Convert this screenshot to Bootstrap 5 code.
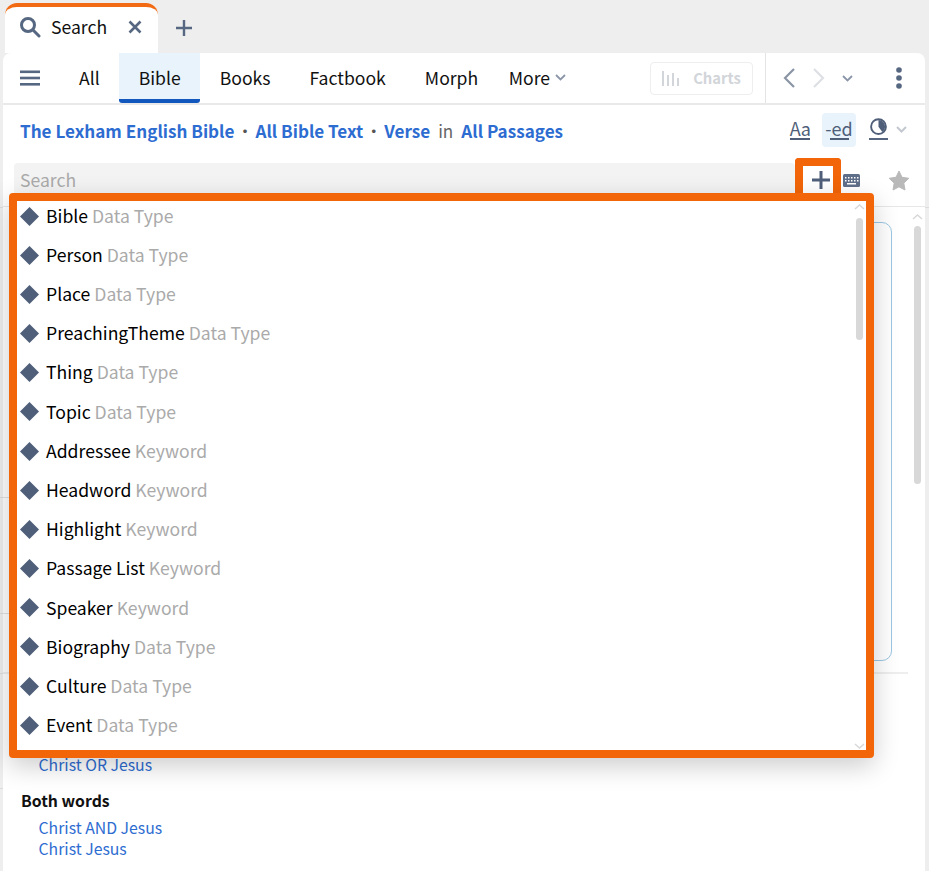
<!DOCTYPE html>
<html lang="en"><head><meta charset="utf-8"><title>Search</title>
<link href="https://cdn.jsdelivr.net/npm/bootstrap@5.3.0/dist/css/bootstrap.min.css" rel="stylesheet">
<style>
html,body{height:871px;overflow:hidden}
body{font-family:"Noto Sans CJK SC","Noto Sans",sans-serif;font-size:17.6px;color:#111;position:relative;
background-color:#eee;background-image:linear-gradient(#dcdcdc,#dcdcdc);background-repeat:repeat-x;background-size:3px 1px;background-position:0 207px}
a{text-decoration:none}
svg{display:block;flex:none}
.tabbar{height:53px;padding:3px 0 0 5px;gap:17px;background:#eee}
.tabitem{width:153px;height:50px;background:#fff;border-top:4px solid #f26a13;border-radius:12px 12px 0 0;padding:0 16px 6px 14px;gap:10px}
.sheet{height:818px;margin:0 4px 0 3px;background:#fff;border-radius:8px 8px 0 0;display:flex;flex-direction:column}
.navrow{height:52px;border-bottom:2px solid #e9e9e9;flex:none}
.burger{width:62px;padding-left:17px}
.navlink{height:50px;padding:0 19.500px;color:#111;line-height:50px;border-bottom:4px solid transparent;margin:0}
.navlink.on{background:#e8f3fc;border-bottom-color:#1257bd;border-radius:0 0 3px 3px}
.navlink.firstlink{padding-left:14px}
.morelink{padding-left:11px;gap:5px}
.chartbtn{width:103px;height:33px;border:1px solid #eee;border-radius:4px;color:#d2d5d9;font-size:14.800px;font-weight:600;gap:13px;margin-right:12px}
.navtools{width:160px;height:100%;border-left:1px solid #e4e4e4;padding:0 23px 0 17px}
.nextchev{margin-left:18px}
.downchev{margin-left:17px}
.crumbs{height:52px;padding:0 17px;color:#666;flex:none;font-size:17.100px}
.crumbs a{color:#2d6cd1;font-weight:600}
.dotsep{width:21px;text-align:center;font-size:17px;color:#555}
.inword{margin:0 8px}
.viewtools{margin-right:1px;padding-bottom:3px}
.viewbtn{width:34px;height:34px;border-radius:4px;font-size:18px;color:#4f5f79;line-height:1;gap:1px}
.viewbtn.on{background:#e8f3fc;margin:0 13px 0 12px}
.aabtn{width:20px;letter-spacing:-.5px}
.piebtn{width:19px;margin-right:8px}
.searchrow{height:50px;flex:none;border-bottom:1px solid #e7e7e7;padding:6px 0 0 11px}
.searchbox{width:781px;height:31px;background:#f3f3f3;border-radius:4px 4px 0 0;padding-left:6px;color:#aaa;line-height:33px}
.keyslot{gap:28px;margin-left:48px}
.keyicon{margin-top:11px}
.staricon{margin-top:7px}
.bodyarea{flex:1;position:relative;overflow:hidden;
background-image:linear-gradient(#e2e2e2,#e2e2e2),linear-gradient(#e2e2e2,#e2e2e2);background-repeat:no-repeat;background-size:6px 1px;background-position:0 290px,0 406px}
.syntaxbox{width:500px;height:439px;border:1px solid #9cc7e4;border-radius:10px;margin:15px 33px 0 auto}
.divline{height:2px;background:#eee;margin:11px 17px 0 0}
.hintblock{padding-left:18px;margin-top:80px;font-size:15.800px;line-height:21px}
.hintblock a{display:block;padding-left:17.500px;color:#2d6cd1}
.hinthead{font-weight:600;color:#111;margin:15px 0 6px}
.rail{width:7px;background:#d8d8d8;border-radius:4px;position:absolute}
.outerrail{right:4px;top:19px;height:258px}
.outerarrow{position:absolute;right:2px;top:7px}
.overtarget{position:absolute;left:795px;top:158px;width:46px;height:39px;border:8px solid #f26508;border-bottom:0;border-radius:4px 4px 0 0;background:#fff;z-index:5;display:flex;justify-content:center;padding:5px 0 0 5px}
.droplist{position:absolute;left:9px;top:193px;width:865px;height:565px;border:8px solid #f26508;border-radius:4px;background:#fff;box-shadow:0 8px 26px rgba(0,0,0,.2);z-index:6;padding:0 0 0 3px}
.dropitem{height:30px;margin-bottom:9.180px;gap:7px;color:#000}
.dropitem span.kind{color:#aaa}
.innerrail{right:3px;top:17px;height:122px}
.arrowtop,.arrowbot{position:absolute;right:1px}
.arrowtop{top:3px}.arrowbot{bottom:1px}
.stripmarks{position:absolute;left:0;width:3px;height:1px;background:#dcdcdc}
.mark1{top:497px}.mark2{top:613px}.mark3{top:673px}.mark4{top:788px}
</style></head><body>
<div class="tabbar d-flex align-items-start">
  <div class="tabitem d-flex align-items-center">
    <svg width="22" height="22" viewBox="0 0 22 22" fill="none" stroke="#566781" stroke-width="3"><circle cx="9" cy="9" r="6.500"/><path d="M14 14l6 6" stroke-linecap="round"/></svg>
    <span>Search</span>
    <svg class="ms-auto" width="14" height="14" viewBox="0 0 14 14" stroke="#566781" stroke-width="2.600"><path d="M1.500 1.500l11 11M12.500 1.500l-11 11"/></svg>
  </div>
  <svg class="align-self-center" width="18" height="18" viewBox="0 0 18 18" stroke="#566781" stroke-width="2.400"><path d="M9 1v16M1 9h16"/></svg>
</div>
<div class="stripmarks mark1"></div><div class="stripmarks mark2"></div><div class="stripmarks mark3"></div><div class="stripmarks mark4"></div>
<div class="sheet">
  <div class="navrow d-flex align-items-center">
    <div class="burger"><svg width="20" height="16" viewBox="0 0 20 16" fill="#566781"><rect width="20" height="2.600" y="0.500"/><rect width="20" height="2.600" y="6.700"/><rect width="20" height="2.600" y="13"/></svg></div>
    <div class="navlink firstlink">All</div>
    <div class="navlink on">Bible</div>
    <div class="navlink">Books</div>
    <div class="navlink">Factbook</div>
    <div class="navlink">Morph</div>
    <div class="morelink d-flex align-items-center">More <svg width="11" height="7" viewBox="0 0 11 7" fill="none" stroke="#8b96a8" stroke-width="1.800"><path d="M1 1l4.500 4.500L10 1"/></svg></div>
    <div class="ms-auto d-flex align-items-center h-100">
      <div class="chartbtn d-flex align-items-center justify-content-center"><svg width="18" height="15" viewBox="0 0 18 15" fill="#d2d5d9"><rect x="0" y="0" width="2" height="15"/><rect x="5" y="4" width="2" height="11"/><rect x="10" y="2" width="2" height="13"/><rect x="15" y="7" width="2" height="8"/></svg>Charts</div>
      <div class="navtools d-flex align-items-center">
        <svg width="12" height="20" viewBox="0 0 12 20" fill="none" stroke="#8a95a5" stroke-width="2.200"><path d="M11 1L2 10l9 9"/></svg>
        <svg class="nextchev" width="12" height="20" viewBox="0 0 12 20" fill="none" stroke="#dde0e4" stroke-width="2.200"><path d="M1 1l9 9-9 9"/></svg>
        <svg class="downchev" width="11" height="7" viewBox="0 0 11 7" fill="none" stroke="#8b96a8" stroke-width="1.800"><path d="M1 1l4.500 4.500L10 1"/></svg>
        <svg class="ms-auto" width="6" height="22" viewBox="0 0 6 22" fill="#566781"><circle cx="3" cy="3" r="2.800"/><circle cx="3" cy="11" r="2.800"/><circle cx="3" cy="19" r="2.800"/></svg>
      </div>
    </div>
  </div>
  <div class="crumbs d-flex align-items-center">
    <a href="#">The Lexham English Bible</a><span class="dotsep">•</span><a href="#">All Bible Text</a><span class="dotsep">•</span><a href="#">Verse</a><span class="inword">in</span><a href="#">All Passages</a>
    <div class="viewtools ms-auto d-flex align-items-center">
      <div class="viewbtn aabtn d-flex flex-column align-items-center justify-content-center"><span>Aa</span><svg width="20" height="2" viewBox="0 0 20 2" fill="#4f5f79"><rect width="20" height="2"/></svg></div>
      <div class="viewbtn on d-flex flex-column align-items-center justify-content-center"><span>-ed</span><svg width="19" height="2" viewBox="0 0 19 2" fill="#4f5f79"><rect width="19" height="2"/></svg></div>
      <div class="viewbtn piebtn d-flex flex-column align-items-center justify-content-center"><svg width="19" height="23" viewBox="0 0 20 24" fill="none"><circle cx="10" cy="9" r="7.800" stroke="#4f5f79" stroke-width="2"/><path d="M10 2a7 7 0 0 1 7 7 7 7 0 0 1-3 5.700L10 9z" fill="#4f5f79"/><rect y="21" width="20" height="2" fill="#4f5f79"/></svg></div>
      <svg width="11" height="7" viewBox="0 0 11 7" fill="none" stroke="#c3c8d0" stroke-width="2"><path d="M1 1l4.500 4.500L10 1"/></svg>
    </div>
  </div>
  <div class="searchrow d-flex">
    <div class="searchbox">Search</div>
    <div class="keyslot d-flex">
      <svg class="keyicon" width="17" height="13" viewBox="0 0 17 13"><rect width="17" height="13" rx="1.500" fill="#5f6f8a"/><g fill="#fff"><rect x="2" y="3" width="1.500" height="1.500"/><rect x="5" y="3" width="1.500" height="1.500"/><rect x="8" y="3" width="1.500" height="1.500"/><rect x="11" y="3" width="1.500" height="1.500"/><rect x="14" y="3" width="1.500" height="1.500"/><rect x="2" y="6" width="1.500" height="1.500"/><rect x="5" y="6" width="1.500" height="1.500"/><rect x="8" y="6" width="1.500" height="1.500"/><rect x="11" y="6" width="1.500" height="1.500"/><rect x="14" y="6" width="1.500" height="1.500"/><rect x="4" y="9" width="9" height="1.500"/></g></svg>
      <svg class="staricon" width="22" height="21" viewBox="0 0 22 21" fill="#b9b9b9" stroke="#b9b9b9" stroke-linejoin="round"><path d="M11 1l3 6.300 6.800 1-5 4.800 1.200 6.900L11 16.800 5 20l1.200-6.900-5-4.800 6.800-1z"/></svg>
    </div>
  </div>
  <div class="bodyarea">
    <div class="syntaxbox"></div>
    <div class="divline"></div>
    <svg class="outerarrow" width="11" height="6" viewBox="0 0 11 6" fill="none" stroke="#d8d8d8" stroke-width="1.500"><path d="M1 5l4.500-4L10 5"/></svg>
    <div class="rail outerrail"></div>
    <div class="hintblock">
      <a href="#">Christ OR Jesus</a>
      <div class="hinthead">Both words</div>
      <a href="#">Christ AND Jesus</a>
      <a href="#">Christ Jesus</a>
    </div>
  </div>
</div>
<div class="overtarget"><svg width="18" height="18" viewBox="0 0 18 18" stroke="#4f5f79" stroke-width="3"><path d="M9 0v18M0 9h18"/></svg></div>
<div class="droplist">
  <div class="dropitem d-flex align-items-center"><svg width="19" height="19" viewBox="0 0 18 18" fill="#4f5f79"><path d="M9 0l9 9-9 9-9-9z"/></svg><span>Bible <span class="kind">Data Type</span></span></div>
  <div class="dropitem d-flex align-items-center"><svg width="19" height="19" viewBox="0 0 18 18" fill="#4f5f79"><path d="M9 0l9 9-9 9-9-9z"/></svg><span>Person <span class="kind">Data Type</span></span></div>
  <div class="dropitem d-flex align-items-center"><svg width="19" height="19" viewBox="0 0 18 18" fill="#4f5f79"><path d="M9 0l9 9-9 9-9-9z"/></svg><span>Place <span class="kind">Data Type</span></span></div>
  <div class="dropitem d-flex align-items-center"><svg width="19" height="19" viewBox="0 0 18 18" fill="#4f5f79"><path d="M9 0l9 9-9 9-9-9z"/></svg><span>PreachingTheme <span class="kind">Data Type</span></span></div>
  <div class="dropitem d-flex align-items-center"><svg width="19" height="19" viewBox="0 0 18 18" fill="#4f5f79"><path d="M9 0l9 9-9 9-9-9z"/></svg><span>Thing <span class="kind">Data Type</span></span></div>
  <div class="dropitem d-flex align-items-center"><svg width="19" height="19" viewBox="0 0 18 18" fill="#4f5f79"><path d="M9 0l9 9-9 9-9-9z"/></svg><span>Topic <span class="kind">Data Type</span></span></div>
  <div class="dropitem d-flex align-items-center"><svg width="19" height="19" viewBox="0 0 18 18" fill="#4f5f79"><path d="M9 0l9 9-9 9-9-9z"/></svg><span>Addressee <span class="kind">Keyword</span></span></div>
  <div class="dropitem d-flex align-items-center"><svg width="19" height="19" viewBox="0 0 18 18" fill="#4f5f79"><path d="M9 0l9 9-9 9-9-9z"/></svg><span>Headword <span class="kind">Keyword</span></span></div>
  <div class="dropitem d-flex align-items-center"><svg width="19" height="19" viewBox="0 0 18 18" fill="#4f5f79"><path d="M9 0l9 9-9 9-9-9z"/></svg><span>Highlight <span class="kind">Keyword</span></span></div>
  <div class="dropitem d-flex align-items-center"><svg width="19" height="19" viewBox="0 0 18 18" fill="#4f5f79"><path d="M9 0l9 9-9 9-9-9z"/></svg><span>Passage List <span class="kind">Keyword</span></span></div>
  <div class="dropitem d-flex align-items-center"><svg width="19" height="19" viewBox="0 0 18 18" fill="#4f5f79"><path d="M9 0l9 9-9 9-9-9z"/></svg><span>Speaker <span class="kind">Keyword</span></span></div>
  <div class="dropitem d-flex align-items-center"><svg width="19" height="19" viewBox="0 0 18 18" fill="#4f5f79"><path d="M9 0l9 9-9 9-9-9z"/></svg><span>Biography <span class="kind">Data Type</span></span></div>
  <div class="dropitem d-flex align-items-center"><svg width="19" height="19" viewBox="0 0 18 18" fill="#4f5f79"><path d="M9 0l9 9-9 9-9-9z"/></svg><span>Culture <span class="kind">Data Type</span></span></div>
  <div class="dropitem d-flex align-items-center"><svg width="19" height="19" viewBox="0 0 18 18" fill="#4f5f79"><path d="M9 0l9 9-9 9-9-9z"/></svg><span>Event <span class="kind">Data Type</span></span></div>
  <svg class="arrowtop" width="11" height="6" viewBox="0 0 11 6" fill="none" stroke="#d8d8d8" stroke-width="1.500"><path d="M1 5l4.500-4L10 5"/></svg>
  <div class="rail innerrail"></div>
  <svg class="arrowbot" width="11" height="6" viewBox="0 0 11 6" fill="none" stroke="#d8d8d8" stroke-width="1.500"><path d="M1 1l4.500 4L10 1"/></svg>
</div>
<script src="https://cdn.jsdelivr.net/npm/bootstrap@5.3.0/dist/js/bootstrap.bundle.min.js"></script>
</body></html>
